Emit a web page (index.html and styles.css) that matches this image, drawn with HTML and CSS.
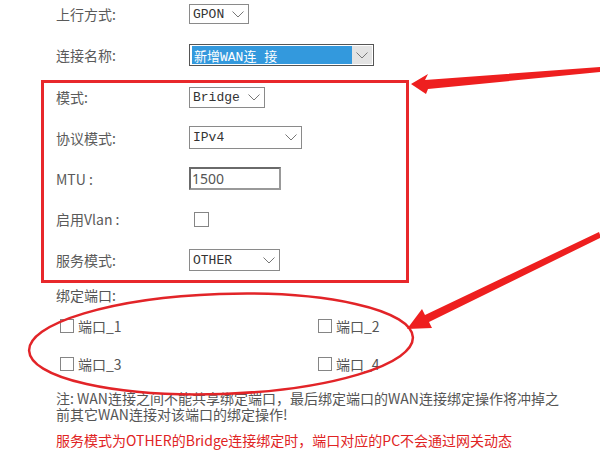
FILE: index.html
```html
<!DOCTYPE html>
<html lang="zh-CN">
  <head>
    <meta charset="UTF-8" />
    <meta name="viewport" content="width=device-width, initial-scale=1.0" />
    <title>WAN连接配置</title>
    <link rel="stylesheet" href="styles.css">
  </head>
  <body>
    <div class="wan-page">
      <div class="form-row">
        <span class="form-label">上行方式:</span>
        <div class="select select-gpon">
          <span class="select-value">GPON</span>
          <svg class="chevron" viewBox="0 0 12 7"><path d="M0.5 0.5 L6 6 L11.5 0.5" /></svg>
        </div>
      </div>

      <div class="form-row">
        <span class="form-label">连接名称:</span>
        <div class="select select-name">
          <span class="select-value selected">新增WAN连 接</span>
          <span class="select-arrow">
            <svg class="chevron" viewBox="0 0 12 7"><path d="M0.5 0.5 L6 6 L11.5 0.5" /></svg>
          </span>
        </div>
      </div>

      <!-- highlighted block -->
      <div class="highlight-box">
        <div class="form-row">
          <span class="form-label">模式:</span>
          <div class="select select-mode">
            <span class="select-value">Bridge</span>
            <svg class="chevron" viewBox="0 0 12 7"><path d="M0.5 0.5 L6 6 L11.5 0.5" /></svg>
          </div>
        </div>
        <div class="form-row">
          <span class="form-label">协议模式:</span>
          <div class="select select-ip">
            <span class="select-value">IPv4</span>
            <svg class="chevron" viewBox="0 0 12 7"><path d="M0.5 0.5 L6 6 L11.5 0.5" /></svg>
          </div>
        </div>
        <div class="form-row">
          <span class="form-label">MTU :</span>
          <div class="text-input">1500</div>
        </div>
        <div class="form-row">
          <span class="form-label">启用Vlan :</span>
          <span class="checkbox vlan-check"></span>
        </div>
        <div class="form-row">
          <span class="form-label">服务模式:</span>
          <div class="select select-service">
            <span class="select-value">OTHER</span>
            <svg class="chevron" viewBox="0 0 12 7"><path d="M0.5 0.5 L6 6 L11.5 0.5" /></svg>
          </div>
        </div>
      </div>

      <div class="bind-label">绑定端口:</div>
      <div class="port-grid">
        <label class="port"><span class="checkbox"></span>端口_1</label>
        <label class="port"><span class="checkbox"></span>端口_2</label>
        <label class="port"><span class="checkbox"></span>端口_3</label>
        <label class="port"><span class="checkbox"></span>端口_4</label>
      </div>

      <p class="note">注: WAN连接之间不能共享绑定端口，最后绑定端口的WAN连接绑定操作将冲掉之<br>前其它WAN连接对该端口的绑定操作!</p>
      <p class="warn">服务模式为OTHER的Bridge连接绑定时，端口对应的PC不会通过网关动态</p>

      <!-- annotations drawn over the form -->
      <svg class="annotations" viewBox="0 0 600 450">
        <ellipse cx="221" cy="344" rx="192" ry="50" transform="rotate(-2 221 344)" />
        <polygon points="411,84 428,74 425,80 600,67 600,72 428,89 426,94" />
        <polygon points="407,329 422,309 425,315 599,232 601,237.5 429,322 432,328" />
      </svg>
    </div>
  </body>
</html>
```

FILE: styles.css
```css
body {
  margin: 0;
  padding: 0;
  background-color: #fff;
  font-family: "Noto Sans CJK SC", "Noto Sans", sans-serif;
  font-size: 14px;
  color: #555;
}

.wan-page {
  position: relative;
  width: 600px;
  height: 450px;
  overflow: hidden;
  display: flex;
  flex-direction: column;
}

.form-row {
  display: flex;
  align-items: center;
  height: 28px;
  padding-left: 56px;
}

.form-row + .form-row {
  margin-top: 13px;
}

.form-label {
  width: 133px;
  line-height: 16px;
  color: #5a5a5a;
}

/* Select boxes */
.select {
  display: flex;
  align-items: center;
  justify-content: space-between;
  box-sizing: border-box;
  border: 1px solid #8a8a8a;
  background-color: #fff;
  padding: 0 4px 0 3px;
  font-family: "Liberation Mono", "Noto Sans CJK SC", monospace;
  font-size: 13px;
  color: #333;
}

.chevron {
  flex-shrink: 0;
  width: 12px;
  height: 7px;
  fill: none;
  stroke: #777;
  stroke-width: 1;
}

.select-gpon {
  width: 60px;
  height: 20px;
}

.select-name {
  width: 185px;
  height: 22px;
  padding: 1px;
  border-color: #555;
}

.select-name .select-value {
  flex: 1;
  height: 100%;
  display: flex;
  align-items: center;
  padding-left: 2px;
  margin-left: 1px;
}

.selected {
  background-color: #3399dd;
  color: #fff;
}

.select-arrow {
  width: 20px;
  height: 100%;
  display: flex;
  align-items: center;
  justify-content: center;
  background-color: #e3e3e3;
}

.select-mode {
  width: 76px;
  height: 21px;
}

.select-ip {
  width: 113px;
  height: 23px;
}

.select-service {
  width: 91px;
  height: 22px;
}

.text-input {
  box-sizing: border-box;
  width: 92px;
  height: 23px;
  border: 2px solid #999;
  border-top-color: #6a6a6a;
  border-left-color: #6a6a6a;
  padding-left: 1px;
  line-height: 19px;
  font-family: "Noto Sans", sans-serif;
  font-size: 14px;
  color: #555;
}

.checkbox {
  display: inline-block;
  box-sizing: border-box;
  width: 14px;
  height: 14px;
  border: 1px solid #858585;
  background-color: #fff;
}

.vlan-check {
  width: 15px;
  height: 15px;
  margin-left: 5px;
}

/* Red frame */
.highlight-box {
  box-sizing: border-box;
  width: 368px;
  margin-left: 41px;
  margin-top: 11px;
  border: 3px solid #e8282b;
  padding-bottom: 6px;
  display: flex;
  flex-direction: column;
}

.highlight-box .form-row {
  padding-left: 12px;
}

.highlight-box .form-row + .form-row {
  margin-top: 12.75px;
}

.bind-label {
  margin-top: 4px;
  padding-left: 56px;
  line-height: 16px;
}

.port-grid {
  display: grid;
  grid-template-columns: 258px 258px;
  row-gap: 14px;
  margin-top: 11px;
  padding-left: 60px;
}

.port {
  display: flex;
  align-items: center;
  gap: 4px;
  height: 24px;
  color: #555;
}

.note {
  margin: 14px 0 0 0;
  padding-left: 56px;
  line-height: 16px;
  color: #555;
}

.warn {
  margin: 10px 0 0 0;
  padding-left: 56px;
  line-height: 16px;
  color: #e02424;
}

.annotations {
  position: absolute;
  top: 0;
  left: 0;
  width: 600px;
  height: 450px;
  pointer-events: none;
}

.annotations ellipse {
  fill: none;
  stroke: #e22428;
  stroke-width: 2.5;
}

.annotations polygon {
  fill: #ee1f1f;
}
```
